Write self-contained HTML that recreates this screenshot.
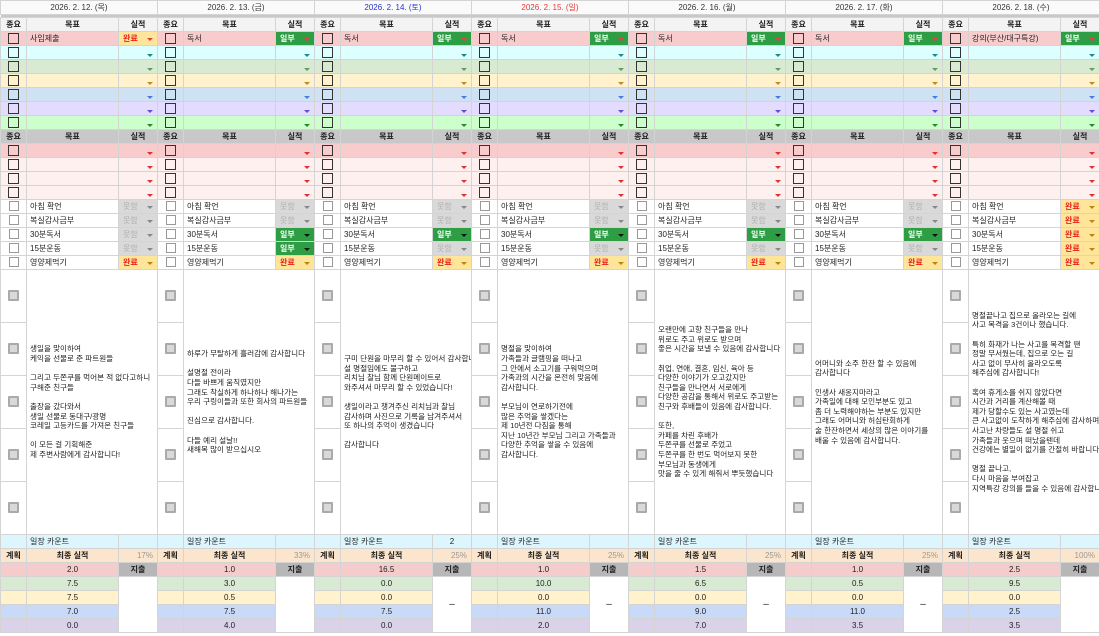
<!DOCTYPE html>
<html><head><meta charset="utf-8"><style>
*{margin:0;padding:0;box-sizing:border-box}
body{width:1099px;height:636px;overflow:hidden;background:#fff;font-family:"Liberation Sans","Noto Sans CJK KR",sans-serif;font-size:8px;color:#222}
table{border-collapse:collapse;table-layout:fixed;width:1099px}
td{border:1px solid #d4d4d4;padding:0;height:14px;line-height:12px;white-space:nowrap;overflow:hidden;text-align:center;vertical-align:middle}
td.l{text-align:left;padding-left:3px}
tr.h14{height:14px}
.dt{background:#fafafa;color:#333;font-size:8px}
.sep td{height:3px;background:#c8c8c8;border:none}
.hd td{background:#f3f3f3;font-weight:bold}
.gh td{background:#c8c8c8;font-weight:bold}
i.b{display:inline-block;width:11px;height:11px;border:1.5px solid #333;vertical-align:middle}
i.w{display:inline-block;width:10px;height:10px;border:1px solid #999;background:#fff;vertical-align:middle}
i.n{display:inline-block;width:11px;height:11px;border:2px solid #aaa;border-radius:1px;background:#fff;vertical-align:middle}
s{float:right;margin:5px 4px 0 0;width:0;height:0;border-left:3px solid transparent;border-right:3px solid transparent;border-top:3px solid #888}
td.st{text-align:left;padding-left:4px}
.g{background:#2e9e44 !important;color:#fff;font-weight:bold}
.g s{border-top-color:#111}
.y{background:#ffe599 !important;color:#e8231c;font-weight:bold}
.y s{border-top-color:#b8860b}
.n{background:#d9d9d9 !important;color:#b0b0b0}
.n s{border-top-color:#888}
.r1 td{background:#f8cccc}.r1 s{border-top-color:#e04040}
.r2 td{background:#ddffff}.r2 s{border-top-color:#1a8a8a}
.r3 td{background:#d9ead3}.r3 s{border-top-color:#6a9a5a}
.r4 td{background:#fff2cc}.r4 s{border-top-color:#c08a20}
.r5 td{background:#cfe2f3}.r5 s{border-top-color:#4a7ae0}
.r6 td{background:#e3dcff}.r6 s{border-top-color:#6050d0}
.r7 td{background:#ccffcc}.r7 s{border-top-color:#2a8a2a}
.p1 td{background:#f8cccc}.p1 s{border-top-color:#e03030}
.p2 td{background:#fff0f0}.p2 s{border-top-color:#e03030}
.nt td{height:53px}
td.note{text-align:left;padding-left:3px;white-space:pre;line-height:9.6px;font-size:7.6px;vertical-align:middle;background:#fff}
.cnt td{background:#ddf6fd}
.pl td{background:#fce5cd}
.pl td.pc{text-align:right;padding-right:4px;color:#999;font-weight:normal}
.pl td.b{font-weight:bold}
.v1 td{background:#f4cccc}.v2 td{background:#d9ead3}.v3 td{background:#fff2cc}.v4 td{background:#c9daf8}.v5 td{background:#d9d2e9}
td.ex{background:#b7b7b7 !important;font-weight:bold}
td.wh{background:#fff !important;font-size:10px}
</style></head><body>
<table>
<colgroup>
<col style="width:26px"><col style="width:92px"><col style="width:39px">
<col style="width:26px"><col style="width:92px"><col style="width:39px">
<col style="width:26px"><col style="width:92px"><col style="width:39px">
<col style="width:26px"><col style="width:92px"><col style="width:39px">
<col style="width:26px"><col style="width:92px"><col style="width:39px">
<col style="width:26px"><col style="width:92px"><col style="width:39px">
<col style="width:26px"><col style="width:92px"><col style="width:39px">
</colgroup>
<tr><td colspan="3" class="dt">2026. 2. 12. (목)</td><td colspan="3" class="dt">2026. 2. 13. (금)</td><td colspan="3" class="dt" style="color:#2233cc">2026. 2. 14. (토)</td><td colspan="3" class="dt" style="color:#e53935">2026. 2. 15. (일)</td><td colspan="3" class="dt">2026. 2. 16. (월)</td><td colspan="3" class="dt">2026. 2. 17. (화)</td><td colspan="3" class="dt">2026. 2. 18. (수)</td></tr>
<tr class="sep"><td colspan="21"></td></tr>
<tr class="hd"><td>종요</td><td>목표</td><td>실적</td><td>종요</td><td>목표</td><td>실적</td><td>종요</td><td>목표</td><td>실적</td><td>종요</td><td>목표</td><td>실적</td><td>종요</td><td>목표</td><td>실적</td><td>종요</td><td>목표</td><td>실적</td><td>종요</td><td>목표</td><td>실적</td></tr>
<tr class="r1"><td><i class="b"></i></td><td class="l">사임제출</td><td class="st y">완료<s></s></td><td><i class="b"></i></td><td class="l">독서</td><td class="st g">일부<s></s></td><td><i class="b"></i></td><td class="l">독서</td><td class="st g">일부<s></s></td><td><i class="b"></i></td><td class="l">독서</td><td class="st g">일부<s></s></td><td><i class="b"></i></td><td class="l">독서</td><td class="st g">일부<s></s></td><td><i class="b"></i></td><td class="l">독서</td><td class="st g">일부<s></s></td><td><i class="b"></i></td><td class="l">강의(부산/대구특강)</td><td class="st g">일부<s></s></td></tr>
<tr class="r2"><td><i class="b"></i></td><td></td><td><s></s></td><td><i class="b"></i></td><td></td><td><s></s></td><td><i class="b"></i></td><td></td><td><s></s></td><td><i class="b"></i></td><td></td><td><s></s></td><td><i class="b"></i></td><td></td><td><s></s></td><td><i class="b"></i></td><td></td><td><s></s></td><td><i class="b"></i></td><td></td><td><s></s></td></tr>
<tr class="r3"><td><i class="b"></i></td><td></td><td><s></s></td><td><i class="b"></i></td><td></td><td><s></s></td><td><i class="b"></i></td><td></td><td><s></s></td><td><i class="b"></i></td><td></td><td><s></s></td><td><i class="b"></i></td><td></td><td><s></s></td><td><i class="b"></i></td><td></td><td><s></s></td><td><i class="b"></i></td><td></td><td><s></s></td></tr>
<tr class="r4"><td><i class="b"></i></td><td></td><td><s></s></td><td><i class="b"></i></td><td></td><td><s></s></td><td><i class="b"></i></td><td></td><td><s></s></td><td><i class="b"></i></td><td></td><td><s></s></td><td><i class="b"></i></td><td></td><td><s></s></td><td><i class="b"></i></td><td></td><td><s></s></td><td><i class="b"></i></td><td></td><td><s></s></td></tr>
<tr class="r5"><td><i class="b"></i></td><td></td><td><s></s></td><td><i class="b"></i></td><td></td><td><s></s></td><td><i class="b"></i></td><td></td><td><s></s></td><td><i class="b"></i></td><td></td><td><s></s></td><td><i class="b"></i></td><td></td><td><s></s></td><td><i class="b"></i></td><td></td><td><s></s></td><td><i class="b"></i></td><td></td><td><s></s></td></tr>
<tr class="r6"><td><i class="b"></i></td><td></td><td><s></s></td><td><i class="b"></i></td><td></td><td><s></s></td><td><i class="b"></i></td><td></td><td><s></s></td><td><i class="b"></i></td><td></td><td><s></s></td><td><i class="b"></i></td><td></td><td><s></s></td><td><i class="b"></i></td><td></td><td><s></s></td><td><i class="b"></i></td><td></td><td><s></s></td></tr>
<tr class="r7"><td><i class="b"></i></td><td></td><td><s></s></td><td><i class="b"></i></td><td></td><td><s></s></td><td><i class="b"></i></td><td></td><td><s></s></td><td><i class="b"></i></td><td></td><td><s></s></td><td><i class="b"></i></td><td></td><td><s></s></td><td><i class="b"></i></td><td></td><td><s></s></td><td><i class="b"></i></td><td></td><td><s></s></td></tr>
<tr class="gh"><td>종요</td><td>목표</td><td>실적</td><td>종요</td><td>목표</td><td>실적</td><td>종요</td><td>목표</td><td>실적</td><td>종요</td><td>목표</td><td>실적</td><td>종요</td><td>목표</td><td>실적</td><td>종요</td><td>목표</td><td>실적</td><td>종요</td><td>목표</td><td>실적</td></tr>
<tr class="p1"><td><i class="b"></i></td><td></td><td><s></s></td><td><i class="b"></i></td><td></td><td><s></s></td><td><i class="b"></i></td><td></td><td><s></s></td><td><i class="b"></i></td><td></td><td><s></s></td><td><i class="b"></i></td><td></td><td><s></s></td><td><i class="b"></i></td><td></td><td><s></s></td><td><i class="b"></i></td><td></td><td><s></s></td></tr>
<tr class="p2"><td><i class="b"></i></td><td></td><td><s></s></td><td><i class="b"></i></td><td></td><td><s></s></td><td><i class="b"></i></td><td></td><td><s></s></td><td><i class="b"></i></td><td></td><td><s></s></td><td><i class="b"></i></td><td></td><td><s></s></td><td><i class="b"></i></td><td></td><td><s></s></td><td><i class="b"></i></td><td></td><td><s></s></td></tr>
<tr class="p2"><td><i class="b"></i></td><td></td><td><s></s></td><td><i class="b"></i></td><td></td><td><s></s></td><td><i class="b"></i></td><td></td><td><s></s></td><td><i class="b"></i></td><td></td><td><s></s></td><td><i class="b"></i></td><td></td><td><s></s></td><td><i class="b"></i></td><td></td><td><s></s></td><td><i class="b"></i></td><td></td><td><s></s></td></tr>
<tr class="p2"><td><i class="b"></i></td><td></td><td><s></s></td><td><i class="b"></i></td><td></td><td><s></s></td><td><i class="b"></i></td><td></td><td><s></s></td><td><i class="b"></i></td><td></td><td><s></s></td><td><i class="b"></i></td><td></td><td><s></s></td><td><i class="b"></i></td><td></td><td><s></s></td><td><i class="b"></i></td><td></td><td><s></s></td></tr>
<tr><td><i class="w"></i></td><td class="l">아침 확언</td><td class="st n">못함<s></s></td><td><i class="w"></i></td><td class="l">아침 확언</td><td class="st n">못함<s></s></td><td><i class="w"></i></td><td class="l">아침 확언</td><td class="st n">못함<s></s></td><td><i class="w"></i></td><td class="l">아침 확언</td><td class="st n">못함<s></s></td><td><i class="w"></i></td><td class="l">아침 확언</td><td class="st n">못함<s></s></td><td><i class="w"></i></td><td class="l">아침 확언</td><td class="st n">못함<s></s></td><td><i class="w"></i></td><td class="l">아침 확언</td><td class="st y">완료<s></s></td></tr>
<tr><td><i class="w"></i></td><td class="l">복실감사금부</td><td class="st n">못함<s></s></td><td><i class="w"></i></td><td class="l">복실감사금부</td><td class="st n">못함<s></s></td><td><i class="w"></i></td><td class="l">복실감사금부</td><td class="st n">못함<s></s></td><td><i class="w"></i></td><td class="l">복실감사금부</td><td class="st n">못함<s></s></td><td><i class="w"></i></td><td class="l">복실감사금부</td><td class="st n">못함<s></s></td><td><i class="w"></i></td><td class="l">복실감사금부</td><td class="st n">못함<s></s></td><td><i class="w"></i></td><td class="l">복실감사금부</td><td class="st y">완료<s></s></td></tr>
<tr><td><i class="w"></i></td><td class="l">30분독서</td><td class="st n">못함<s></s></td><td><i class="w"></i></td><td class="l">30분독서</td><td class="st g">일부<s></s></td><td><i class="w"></i></td><td class="l">30분독서</td><td class="st g">일부<s></s></td><td><i class="w"></i></td><td class="l">30분독서</td><td class="st g">일부<s></s></td><td><i class="w"></i></td><td class="l">30분독서</td><td class="st g">일부<s></s></td><td><i class="w"></i></td><td class="l">30분독서</td><td class="st g">일부<s></s></td><td><i class="w"></i></td><td class="l">30분독서</td><td class="st y">완료<s></s></td></tr>
<tr><td><i class="w"></i></td><td class="l">15분운동</td><td class="st n">못함<s></s></td><td><i class="w"></i></td><td class="l">15분운동</td><td class="st g">일부<s></s></td><td><i class="w"></i></td><td class="l">15분운동</td><td class="st n">못함<s></s></td><td><i class="w"></i></td><td class="l">15분운동</td><td class="st n">못함<s></s></td><td><i class="w"></i></td><td class="l">15분운동</td><td class="st n">못함<s></s></td><td><i class="w"></i></td><td class="l">15분운동</td><td class="st n">못함<s></s></td><td><i class="w"></i></td><td class="l">15분운동</td><td class="st y">완료<s></s></td></tr>
<tr><td><i class="w"></i></td><td class="l">영양제먹기</td><td class="st y">완료<s></s></td><td><i class="w"></i></td><td class="l">영양제먹기</td><td class="st y">완료<s></s></td><td><i class="w"></i></td><td class="l">영양제먹기</td><td class="st y">완료<s></s></td><td><i class="w"></i></td><td class="l">영양제먹기</td><td class="st y">완료<s></s></td><td><i class="w"></i></td><td class="l">영양제먹기</td><td class="st y">완료<s></s></td><td><i class="w"></i></td><td class="l">영양제먹기</td><td class="st y">완료<s></s></td><td><i class="w"></i></td><td class="l">영양제먹기</td><td class="st y">완료<s></s></td></tr>
<tr class="nt">
<td><i class="n"></i></td><td colspan="2" rowspan="5" class="note">생일을 맞이하여
케익을 선물로 준 파트원들

그리고 두쫀쿠를 먹어본 적 없다고하니
구해준 친구들

출장을 갔다와서
생일 선물로 동대구/광명
코레일 고등카드를 가져온 친구들

이 모든 걸 기획해준
제 주변사람에게 감사합니다!</td>
<td><i class="n"></i></td><td colspan="2" rowspan="5" class="note">하루가 무탈하게 흘러감에 감사합니다

설명절 전이라
다들 바쁘게 움직였지만
그래도 착실하게 하나하나 해나가는
우리 구링이들과 또한 회사의 파트원들

진심으로 감사합니다.

다들 예리 설날!!
새해복 많이 받으십시오</td>
<td><i class="n"></i></td><td colspan="2" rowspan="5" class="note">구미 단원을 마무리 할 수 있어서 감사합니다
설 명절임에도 불구하고
리치님 찰님 함께 단원메이트로
와주셔서 마무리 할 수 있었습니다!

생일이라고 챙겨주신 리치님과 찰님
감사하며 사진으로 기록을 남겨주셔서
또 하나의 추억이 생겼습니다

감사합니다</td>
<td><i class="n"></i></td><td colspan="2" rowspan="5" class="note">명절을 맞이하여
가족들과 글램핑을 떠나고
그 안에서 소고기를 구워먹으며
가족과의 시간을 온전히 맞음에
감사합니다.

부모님이 연로하기전에
많은 추억을 쌓겠다는
제 10년전 다짐을 통해
지난 10년간 부모님 그리고 가족들과
다양한 추억을 쌓을 수 있음에
감사합니다.</td>
<td><i class="n"></i></td><td colspan="2" rowspan="5" class="note">오랜만에 고향 친구들을 만나
위로도 주고 위로도 받으며
좋은 시간을 보낼 수 있음에 감사합니다

취업, 연애, 결혼, 임신, 육아 등
다양한 이야기가 오고갔지만
친구들을 만나면서 서로에게
다양한 공감을 통해서 위로도 주고받는
친구와 후배들이 있음에 감사합니다.

또한,
카페를 차린 후배가
두쫀쿠를 선물로 주었고
두쫀쿠를 한 번도 먹어보지 못한
부모님과 동생에게
맛을 줄 수 있게 해줘서 뿌듯했습니다</td>
<td><i class="n"></i></td><td colspan="2" rowspan="5" class="note">어머니와 소주 한잔 할 수 있음에
감사합니다

인생사 새옹지마라고
가족일에 대해 모인부분도 있고
좀 더 노력해야하는 부분도 있지만
그래도 어머니와 허심탄회하게
술 한잔하면서 세상의 많은 이야기를
배울 수 있음에 감사합니다.</td>
<td><i class="n"></i></td><td colspan="2" rowspan="5" class="note">명절끝나고 집으로 올라오는 길에
사고 목격을 3건이나 했습니다.

특히 화재가 나는 사고를 목격할 땐
정말 무서웠는데, 집으로 오는 길
사고 없이 무사히 올라오도록
해주심에 감사합니다!

혹여 휴게소를 쉬지 않았다면
시간과 거리를 계산해볼 때
제가 당할수도 있는 사고였는데
큰 사고없이 도착하게 해주심에 감사하며
사고난 차량들도 설 명절 쉬고
가족들과 웃으며 떠났을텐데
건강에는 별일이 없기를 간절히 바랍니다.

명절 끝나고,
다시 마음을 부여잡고
지역특강 강의를 들을 수 있음에 감사합니다!</td>
</tr>
<tr class="nt"><td><i class="n"></i></td><td><i class="n"></i></td><td><i class="n"></i></td><td><i class="n"></i></td><td><i class="n"></i></td><td><i class="n"></i></td><td><i class="n"></i></td></tr>
<tr class="nt"><td><i class="n"></i></td><td><i class="n"></i></td><td><i class="n"></i></td><td><i class="n"></i></td><td><i class="n"></i></td><td><i class="n"></i></td><td><i class="n"></i></td></tr>
<tr class="nt"><td><i class="n"></i></td><td><i class="n"></i></td><td><i class="n"></i></td><td><i class="n"></i></td><td><i class="n"></i></td><td><i class="n"></i></td><td><i class="n"></i></td></tr>
<tr class="nt"><td><i class="n"></i></td><td><i class="n"></i></td><td><i class="n"></i></td><td><i class="n"></i></td><td><i class="n"></i></td><td><i class="n"></i></td><td><i class="n"></i></td></tr>
<tr class="cnt"><td></td><td class="l">일장 카운트</td><td></td><td></td><td class="l">일장 카운트</td><td></td><td></td><td class="l">일장 카운트</td><td>2</td><td></td><td class="l">일장 카운트</td><td></td><td></td><td class="l">일장 카운트</td><td></td><td></td><td class="l">일장 카운트</td><td></td><td></td><td class="l">일장 카운트</td><td></td></tr>
<tr class="pl"><td class="b">계획</td><td class="b">최종 실적</td><td class="pc">17%</td><td class="b">계획</td><td class="b">최종 실적</td><td class="pc">33%</td><td class="b">계획</td><td class="b">최종 실적</td><td class="pc">25%</td><td class="b">계획</td><td class="b">최종 실적</td><td class="pc">25%</td><td class="b">계획</td><td class="b">최종 실적</td><td class="pc">25%</td><td class="b">계획</td><td class="b">최종 실적</td><td class="pc">25%</td><td class="b">계획</td><td class="b">최종 실적</td><td class="pc">100%</td></tr>
<tr class="v1"><td></td><td>2.0</td><td class="ex">지출</td><td></td><td>1.0</td><td class="ex">지출</td><td></td><td>16.5</td><td class="ex">지출</td><td></td><td>1.0</td><td class="ex">지출</td><td></td><td>1.5</td><td class="ex">지출</td><td></td><td>1.0</td><td class="ex">지출</td><td></td><td>2.5</td><td class="ex">지출</td></tr>
<tr class="v2"><td></td><td>7.5</td><td rowspan="4" class="wh"></td><td></td><td>3.0</td><td rowspan="4" class="wh"></td><td></td><td>0.0</td><td rowspan="4" class="wh">–</td><td></td><td>10.0</td><td rowspan="4" class="wh">–</td><td></td><td>6.5</td><td rowspan="4" class="wh">–</td><td></td><td>0.5</td><td rowspan="4" class="wh">–</td><td></td><td>9.5</td><td rowspan="4" class="wh"></td></tr>
<tr class="v3"><td></td><td>7.5</td><td></td><td>0.5</td><td></td><td>0.0</td><td></td><td>0.0</td><td></td><td>0.0</td><td></td><td>0.0</td><td></td><td>0.0</td></tr>
<tr class="v4"><td></td><td>7.0</td><td></td><td>7.5</td><td></td><td>7.5</td><td></td><td>11.0</td><td></td><td>9.0</td><td></td><td>11.0</td><td></td><td>2.5</td></tr>
<tr class="v5"><td></td><td>0.0</td><td></td><td>4.0</td><td></td><td>0.0</td><td></td><td>2.0</td><td></td><td>7.0</td><td></td><td>3.5</td><td></td><td>3.5</td></tr>
</table>
</body></html>
